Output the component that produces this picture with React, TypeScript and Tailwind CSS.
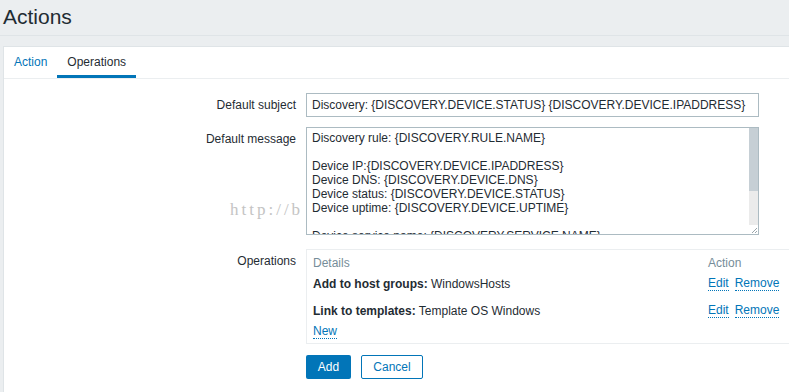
/**
 * Actions - operations tab of an action form
 */

const operations = [
    { label: 'Add to host groups:', value: 'WindowsHosts' },
    { label: 'Link to templates:', value: 'Template OS Windows' },
];

const messageLines = [
    'Discovery rule: {DISCOVERY.RULE.NAME}',
    '',
    'Device IP:{DISCOVERY.DEVICE.IPADDRESS}',
    'Device DNS: {DISCOVERY.DEVICE.DNS}',
    'Device status: {DISCOVERY.DEVICE.STATUS}',
    'Device uptime: {DISCOVERY.DEVICE.UPTIME}',
    '',
    'Device service name: {DISCOVERY.SERVICE.NAME}',
];

export default function App() {
    return (
        <div className="relative min-h-screen h-[392px] overflow-hidden bg-[#ebeef0] font-['Liberation_Sans',Arial,sans-serif] text-[12px] text-[#1f2c33]">
            {/* Header */}
            <header className="h-[36px] border-b border-[#dfe4e7] pl-[3px]">
                <h1 className="pt-[2px] text-[21px] leading-[30px]">Actions</h1>
            </header>

            {/* Panel */}
            <div className="ml-[3px] mt-[10px] h-[400px] border-l border-t border-[#dfe4e7] bg-white">
                {/* Tabs */}
                <div className="flex h-[32px] border-b border-[#ebeef0]">
                    <div className="flex h-[31px] items-center px-[10px] pb-[1px] text-[#0275b8]">Action</div>
                    <div className="flex h-[31px] items-center border-b-[3px] border-[#0275b8] px-[10px] pt-[2px]">Operations</div>
                </div>

                {/* Form */}
                <div className="grid grid-cols-[292px_1fr] gap-x-[10px] pt-[14px]">
                    <div className="text-right leading-[24px]">Default subject</div>
                    <div className="h-[24px] w-[453px] border border-[#acbbc2] px-[5px] leading-[22px]">
                        Discovery: {'{DISCOVERY.DEVICE.STATUS}'} {'{DISCOVERY.DEVICE.IPADDRESS}'}
                    </div>

                    <div className="mt-[10px] text-right leading-[24px]">Default message</div>
                    <div className="mt-[10px] flex h-[108px] w-[453px] overflow-hidden border border-[#acbbc2]">
                        <div className="flex-1 overflow-hidden px-[5px] pt-[3px] leading-[14px]">
                            {messageLines.map((line, i) => (
                                <div key={i} className="h-[14px] whitespace-nowrap">{line}</div>
                            ))}
                        </div>
                        <div className="flex w-[9px] flex-col bg-[#ebebeb]">
                            <div className="h-[63px] bg-[#c6cfd5]" />
                            <div className="flex-1" />
                            <div className="flex h-[9px] items-end justify-end bg-white">
                                <svg width="7" height="7" viewBox="0 0 7 7">
                                    <path d="M6 1L1 6M6 4L4 6" stroke="#9aa5ab" strokeWidth="1" />
                                </svg>
                            </div>
                        </div>
                    </div>

                    <div className="mt-[14px] text-right leading-[24px]">Operations</div>
                    <div className="mt-[14px] border-b border-l border-t border-[#ebeef0] pb-[1px] pl-[6px] pt-[2px]">
                        <div className="grid h-[22px] grid-cols-[395px_auto] items-center text-[#768d99]">
                            <span>Details</span>
                            <span>Action</span>
                        </div>
                        {operations.map((op, i) => (
                            <div key={i} className={`grid h-[20px] grid-cols-[395px_auto] items-center ${i > 0 ? 'mt-[7px]' : ''}`}>
                                <span>
                                    <b>{op.label}</b> {op.value}
                                </span>
                                <span className="flex gap-[6px] text-[#0275b8]">
                                    <span className="border-b border-dotted border-[#0275b8] leading-[13px]">Edit</span>
                                    <span className="border-b border-dotted border-[#0275b8] leading-[13px]">Remove</span>
                                </span>
                            </div>
                        ))}
                        <div className="flex h-[21px] items-center">
                            <span className="border-b border-dotted border-[#0275b8] leading-[13px] text-[#0275b8]">New</span>
                        </div>
                    </div>

                    <div />
                    <div className="mt-[11px] flex gap-[10px]">
                        <button className="h-[24px] w-[45px] rounded-[2px] bg-[#0275b8] text-white">Add</button>
                        <button className="h-[24px] w-[62px] rounded-[2px] border border-[#0275b8] bg-white text-[#0275b8]">Cancel</button>
                    </div>
                </div>
            </div>

            {/* Watermark */}
            <div className="pointer-events-none absolute left-[230px] top-[197px] font-['Liberation_Serif',serif] text-[17px] tracking-[3px] text-[#c4c4c4]">
                http://b
            </div>
        </div>
    );
}
